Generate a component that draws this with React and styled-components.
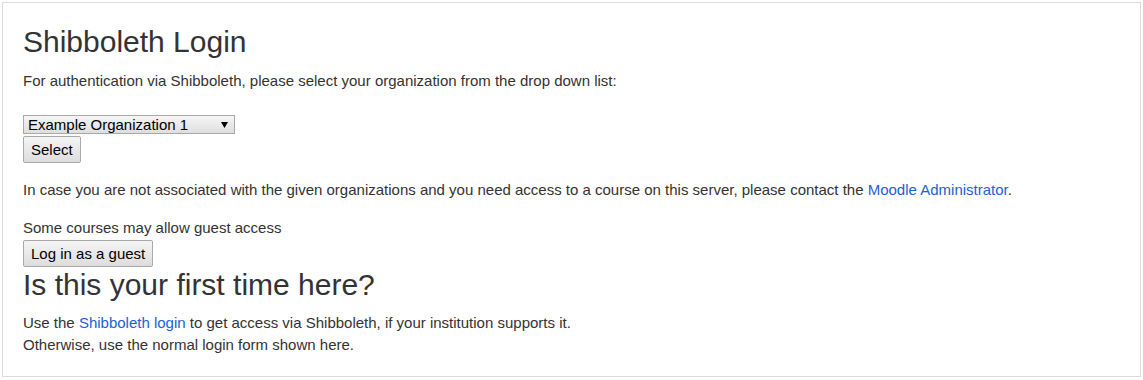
import React from "react";
import styled, { createGlobalStyle } from "styled-components";

const GlobalStyle = createGlobalStyle`
  body {
    margin: 0;
    background: #fff;
    font-family: "Liberation Sans", Arial, sans-serif;
    color: #333;
  }
`;

const Box = styled.div`
  margin: 2px;
  width: 1139px;
  height: 375px;
  box-sizing: border-box;
  border: 1px solid #ddd;
  padding: 20px 20px 0 20px;
`;

const Title = styled.h2`
  margin: 1px 0 0 0;
  font-size: 30px;
  font-weight: 400;
  line-height: 36px;
`;

const Text = styled.p`
  margin: ${({ $m }) => $m || "0"};
  font-size: 15px;
  line-height: ${({ $lh }) => $lh || "20px"};
`;

const Link = styled.a`
  color: #2062d4;
  text-decoration: none;
`;

const Form = styled.form`
  display: flex;
  flex-direction: column;
  align-items: flex-start;
  gap: 2px;
  margin: ${({ $m }) => $m || "0"};
`;

const Select = styled.select`
  width: 212px;
  height: 19px;
  font-family: "Liberation Sans", Arial, sans-serif;
  font-size: 15px;
  color: #000;
  border: 1px solid #a9a9a9;
  border-radius: 0;
  padding: 0 0 0 4px;
  appearance: none;
  background-image: url("data:image/svg+xml;utf8,<svg xmlns='http://www.w3.org/2000/svg' width='8' height='6'><path d='M0 0h7L3.5 6z' fill='black'/></svg>"), linear-gradient(#f6f6f6, #dedede);
  background-repeat: no-repeat;
  background-position: right 5px center, 0 0;
  line-height: 17px;
`;

const Button = styled.button`
  height: 27px;
  padding: 0 7px;
  font-family: "Liberation Sans", Arial, sans-serif;
  font-size: 15px;
  color: #000;
  border: 1px solid #a9a9a9;
  border-radius: 2px;
  background: linear-gradient(#f5f5f5, #dddddd);
`;

const Heading = styled.h2`
  margin: 0;
  font-size: 30px;
  font-weight: 400;
  line-height: 36px;
`;

export default function App() {
  return (
    <>
      <GlobalStyle />
      <Box>
        <Title>Shibboleth Login</Title>
        <Text $m="11px 0 0 0">
          For authentication via Shibboleth, please select your organization from the drop down list:
        </Text>
        <Form $m="24px 0 0 0">
          <Select defaultValue="1">
            <option value="1">Example Organization 1</option>
          </Select>
          <Button type="button">Select</Button>
        </Form>
        <Text $m="17px 0 0 0">
          In case you are not associated with the given organizations and you need access to a course on this server, please contact the{" "}
          <Link href="#">Moodle Administrator</Link>.
        </Text>
        <Text $m="18px 0 0 0">Some courses may allow guest access</Text>
        <Form $m="2px 0 0 0">
          <Button type="button">Log in as a guest</Button>
        </Form>
        <Heading>Is this your first time here?</Heading>
        <Text $lh="22px" $m="9px 0 0 0">
          Use the <Link href="#">Shibboleth login</Link> to get access via Shibboleth, if your institution supports it.
          <br />
          Otherwise, use the normal login form shown here.
        </Text>
      </Box>
    </>
  );
}
